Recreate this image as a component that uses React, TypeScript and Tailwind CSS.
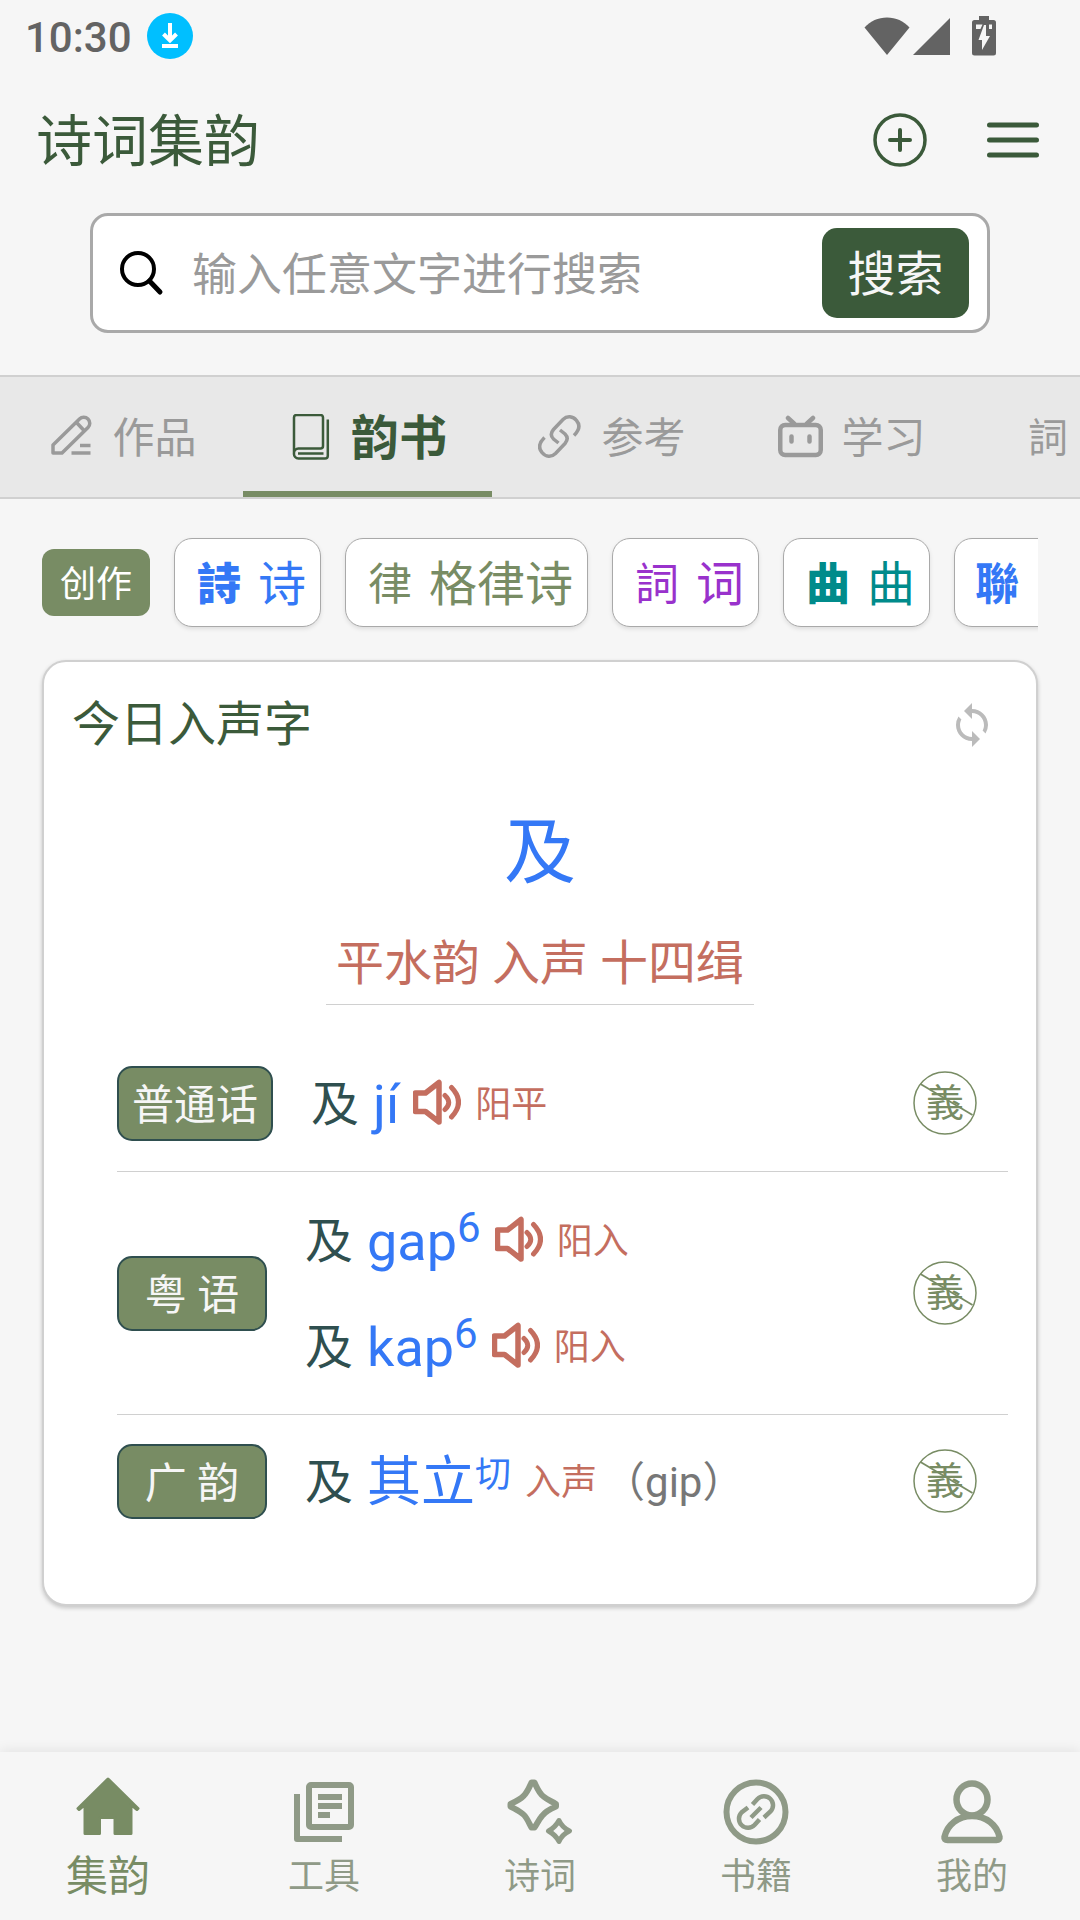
import type { ReactNode } from 'react';
import { MdSync } from 'react-icons/md';

type IconProps = { className?: string };

/* ---------- status bar icons ---------- */

function DownloadBadge() {
  return (
    <svg viewBox="0 0 46 46" className="h-[46px] w-[46px]" aria-hidden="true">
      <circle cx="23" cy="23" r="23" fill="#00bfff" />
      <path d="M23 10v16M16.5 21l6.5 6.5 6.5-6.5" fill="none" stroke="#fff" strokeWidth="4" />
      <path d="M15 33h16" stroke="#fff" strokeWidth="4" />
    </svg>
  );
}

function StatusIcons() {
  return (
    <div className="flex items-center text-[#636363]">
      <svg viewBox="0 0 46 40" className="h-[40px] w-[46px]" aria-hidden="true">
        <path d="M23 39 0.5 11.5C6.5 5 14 1.5 23 1.5S39.500 5 45.500 11.500Z" fill="currentColor" />
      </svg>
      <svg viewBox="0 0 37 40" className="ml-[3px] h-[40px] w-[37px]" aria-hidden="true">
        <path d="M37 2v37H0Z" fill="currentColor" />
      </svg>
      <svg viewBox="0 0 24 40" className="ml-[22px] h-[40px] w-[24px]" aria-hidden="true">
        <path d="M7 0h10v4h4.500Q24 4 24 6.500V37q0 2.500-2.500 2.500h-19Q0 39.500 0 37V6.500Q0 4 2.500 4H7Z" fill="currentColor" />
        <path d="M14 9v11h4L10 34V24H6.500L12 9Z" fill="#f6f6f6" />
        <path d="M4 8.500h6.500L8.500 13H4ZM17 8.500h3V13h-3Z" fill="#f6f6f6" />
      </svg>
    </div>
  );
}

/* ---------- tab icons ---------- */

function PencilIcon({ className }: IconProps) {
  return (
    <svg viewBox="0 0 45 45" className={className} fill="none" stroke="currentColor" strokeWidth="3.500" strokeLinejoin="round" aria-hidden="true">
      <path d="M4 38V30L30.500 4a6 6 0 0 1 8.500 8.500L13 38Z" />
      <path d="M27.500 7.500l7.500 8M31 30.500h10.500M22.500 38h19" />
    </svg>
  );
}

function BookIcon({ className }: IconProps) {
  return (
    <svg viewBox="0 0 45 46" className={className} fill="none" stroke="currentColor" strokeWidth="2.500" aria-hidden="true">
      <path d="M6 39.500V3.500A2.500 2.500 0 0 1 8.500 1h24A2.500 2.500 0 0 1 35 3.500V32a2.500 2.500 0 0 1-2.500 2.500H10.500a4.500 4.500 0 0 0-4.500 5a4.500 4.500 0 0 0 4.500 5H37a2.800 2.800 0 0 0 2.800-2.800V5.500" />
      <path d="M10 39.500h25.500" />
    </svg>
  );
}

function ChainIcon({ className }: IconProps) {
  return (
    <svg viewBox="0 0 45 45" className={className} fill="none" stroke="currentColor" strokeWidth="3.500" aria-hidden="true">
      <path d="M36 20.500c6-6 6-11 2.500-15c-3.500-4.500-9.500-5-13.500-1L15.500 14.500c-3 3.500-3 6.500 0 9.500l5 4" />
      <path d="M6.500 22.500c-6 6-6 11-2.500 15c3.500 4.500 9.500 5 13.500 1L27 28.500c3-3.500 3-6.500 0-9.500l-5-4" />
    </svg>
  );
}

function TvIcon({ className }: IconProps) {
  return (
    <svg viewBox="0 0 45 45" className={className} fill="none" stroke="currentColor" strokeWidth="4.500" strokeLinecap="round" aria-hidden="true">
      <rect x="2.250" y="10" width="40.500" height="30" rx="5" />
      <path d="M10 3l6 5.500M35 3l-6 5.500M13.500 21.500v5M31.500 21.500v5" />
    </svg>
  );
}

/* ---------- content icons ---------- */

function SpeakerIcon() {
  return (
    <svg viewBox="0 0 48 48" className="h-[48px] w-[48px]" fill="none" stroke="currentColor" strokeLinejoin="round" strokeLinecap="round" aria-hidden="true">
      <path d="M2.500 14H12.500L26 3.500V43L12.500 32.500H2.500Z" strokeWidth="5.500" />
      <path d="M32 16.500q7.500 7 0 14M38.500 8.500q14 14.500 0 29.500" strokeWidth="5" />
    </svg>
  );
}

function MeaningButton() {
  return (
    <button type="button" aria-label="释义" className="relative flex h-[64px] w-[64px] shrink-0 items-center justify-center text-[#788c64]">
      <svg viewBox="0 0 64 64" className="absolute inset-0" fill="none" stroke="currentColor" aria-hidden="true">
        <circle cx="32" cy="32" r="31" strokeWidth="1.500" />
        <path d="M7.500 13 59.500 44" strokeWidth="1.800" />
      </svg>
      <span className="text-[38px] leading-none">義</span>
    </button>
  );
}

/* ---------- bottom bar icons ---------- */

function HomeIcon({ className }: IconProps) {
  return (
    <svg viewBox="0 0 66 66" className={className} fill="currentColor" stroke="currentColor" strokeWidth="3" strokeLinejoin="round" strokeLinecap="round" aria-hidden="true">
      <path d="M33 0 3 29.500l1 1 6-5V54.500H24.500V38.500H40V54.500H56V25.500l6 5 1-1Z" />
    </svg>
  );
}

function PagesIcon({ className }: IconProps) {
  return (
    <svg viewBox="0 0 66 66" className={className} fill="none" stroke="currentColor" strokeWidth="6" strokeLinejoin="round" aria-hidden="true">
      <rect x="18" y="6" width="42" height="42" rx="2" />
      <path d="M6 15V60H51M27 18H51M27 27H51M27 36H39" />
    </svg>
  );
}

function SparkleIcon({ className }: IconProps) {
  return (
    <svg viewBox="0 0 66 66" className={className} fill="none" stroke="currentColor" strokeLinejoin="round" aria-hidden="true">
      <path strokeWidth="6" d="M24.500 3.500h3C31 11 32 14 36.500 17.500C40 20.500 44 22 49 25v2.500C43 30 38 33 35 37C31.500 41 30 45 27.500 48.500h-3C22 44 20 39 17 36C13 32 9 30.500 3.500 27.500V25C10 22 14 20 17 16.500C20.500 13 22 9 24.500 3.500Z" />
      <path strokeWidth="5" d="M52 41.500C54 46 56.500 49 62.500 52C57 54.500 54.500 57 52 62.500C49.500 57.500 47 55 41.500 52C47 49 49 47 52 41.500Z" />
    </svg>
  );
}

function LinkCircleIcon({ className }: IconProps) {
  return (
    <svg viewBox="0 0 66 66" className={className} fill="none" stroke="currentColor" aria-hidden="true">
      <circle cx="33" cy="33" r="29.500" strokeWidth="6" />
      <path strokeWidth="4.500" d="M29.500 25.500l5-5.500a8.800 8.800 0 0 1 13 12.500L41 38.500M36.500 40.500l-5 5.500a8.800 8.800 0 0 1-13-12.500L25 28.500M28 38.500L38 28.500" />
    </svg>
  );
}

function PersonIcon({ className }: IconProps) {
  return (
    <svg viewBox="0 0 66 66" className={className} fill="none" stroke="currentColor" strokeWidth="6.500" strokeLinejoin="round" aria-hidden="true">
      <ellipse cx="33" cy="20.500" rx="15.500" ry="16" />
      <path d="M5.500 58C8 46 19 37 33 37S58 46 60.500 58Q61 61 57.500 61H8.500Q5 61 5.500 58Z" />
    </svg>
  );
}

/* ---------- data ---------- */

const tabs = [
  { label: '作品', icon: <PencilIcon className="h-[45px] w-[45px]" /> },
  { label: '韵书', icon: <BookIcon className="h-[46px] w-[45px]" />, active: true },
  { label: '参考', icon: <ChainIcon className="h-[45px] w-[45px]" /> },
  { label: '学习', icon: <TvIcon className="h-[45px] w-[45px]" /> },
];

const kinds = [
  { glyph: '詩', label: '诗', color: 'text-[#3478f6]', weight: 'font-black' },
  { glyph: '律', label: '格律诗', color: 'text-[#788c64]', weight: 'font-normal' },
  { glyph: '詞', label: '词', color: 'text-[#9932cc]', weight: 'font-normal' },
  { glyph: '曲', label: '曲', color: 'text-[#008b8b]', weight: 'font-black' },
];

const navItems = [
  { label: '集韵', icon: <HomeIcon className="h-[66px] w-[66px] overflow-visible" />, active: true },
  { label: '工具', icon: <PagesIcon className="h-[66px] w-[66px]" /> },
  { label: '诗词', icon: <SparkleIcon className="h-[66px] w-[66px]" /> },
  { label: '书籍', icon: <LinkCircleIcon className="h-[66px] w-[66px]" /> },
  { label: '我的', icon: <PersonIcon className="h-[66px] w-[66px]" /> },
];

/* ---------- pieces ---------- */

function Reading({ sound, sup, tone, speaker, note }: { sound: string; sup?: ReactNode; tone: string; speaker?: boolean; note?: string }) {
  return (
    <div className="flex h-[106px] items-center gap-[14px] whitespace-nowrap">
      <span className="pt-1 text-[48px] leading-[60px] text-[#2f4f4f]">及</span>
      <span className="pt-1 text-[54px] leading-[60px] text-[#3478f6]">
        {sound}
        {sup}
      </span>
      {speaker && (
        <button type="button" aria-label="播放读音" className="text-[#c46e5f]">
          <SpeakerIcon />
        </button>
      )}
      <span className="pt-1 text-[36px] leading-[60px] text-[#c46e5f]">{tone}</span>
      {note && <span className="-ml-2 pt-1 text-[42px] leading-[60px] text-[#777]">{note}</span>}
    </div>
  );
}

function DialectRow({ name, wide, children, className }: { name: string; wide?: boolean; children: ReactNode; className: string }) {
  return (
    <li className={`flex items-center pr-[31px] ${className}`}>
      <span
        className={`flex h-[75px] shrink-0 items-center justify-center rounded-[15px] border-2 border-[#2f4f4f] bg-[#788c64] pt-1 text-[42px] whitespace-nowrap text-[#f6f6f6] ${
          wide ? 'w-[156px]' : 'w-[150px]'
        }`}
      >
        {name}
      </span>
      <div className="ml-[38px] flex-1">{children}</div>
      <MeaningButton />
    </li>
  );
}

export default function App() {
  return (
    <div className="flex min-h-screen flex-col overflow-x-hidden bg-[#f6f6f6] font-[Roboto,'Noto_Sans_CJK_SC',sans-serif]">
      <div className="flex h-[72px] items-center justify-between pr-[84px] pl-[25px]">
        <div className="flex items-center gap-[15px]">
          <span className="pt-1 text-[42px] leading-[60px] font-medium text-[#636363]">10:30</span>
          <DownloadBadge />
        </div>
        <StatusIcons />
      </div>

      <header className="flex h-[135px] items-center justify-between pr-[41px] pl-[36px] text-[#3b5a3a]">
        <h1 className="pt-1 text-[56px] leading-[72px]">诗词集韵</h1>
        <div className="flex items-center gap-[60px]">
          <button type="button" aria-label="新建">
            <svg viewBox="0 0 54 54" className="h-[54px] w-[54px]" fill="none" stroke="currentColor" aria-hidden="true">
              <circle cx="27" cy="27" r="25" strokeWidth="3.500" />
              <path d="M27 17v20M17 27h20" strokeWidth="4" strokeLinecap="round" />
            </svg>
          </button>
          <button type="button" aria-label="菜单">
            <svg viewBox="0 0 52 54" className="h-[54px] w-[52px]" fill="none" stroke="currentColor" strokeWidth="5" strokeLinecap="round" aria-hidden="true">
              <path d="M2.500 12h47M2.500 27h47M2.500 42h47" />
            </svg>
          </button>
        </div>
      </header>

      <form
        role="search"
        onSubmit={(e) => e.preventDefault()}
        className="mx-[90px] mt-[6px] mb-[42px] flex h-[120px] items-center rounded-[18px] border-3 border-[#a9a9a9] bg-white pr-[18px] pl-[24px]"
      >
        <svg viewBox="0 0 48 48" className="h-[48px] w-[48px] shrink-0" fill="none" stroke="#000" strokeWidth="4" strokeLinecap="round" aria-hidden="true">
          <circle cx="21" cy="20" r="16" />
          <path d="M32.500 32 43 43" strokeWidth="5" />
        </svg>
        <input
          type="text"
          aria-label="搜索内容"
          placeholder="输入任意文字进行搜索"
          className="ml-[27px] h-[72px] min-w-0 flex-1 bg-transparent pt-1 text-[45px] leading-[60px] outline-none placeholder:text-[#9a9a9a]"
        />
        <button type="submit" className="h-[90px] w-[147px] shrink-0 rounded-[15px] bg-[#3b5a3a] pt-1 text-[48px] leading-[60px] text-[#f6f6f6]">
          搜索
        </button>
      </form>

      <nav aria-label="栏目" className="flex h-[124px] overflow-hidden border-y-2 border-[#d0d0d0] bg-[#e8e8e8] pl-[3px]">
        {tabs.map((t) => (
          <button
            key={t.label}
            type="button"
            className={`flex shrink-0 items-center justify-center gap-[18px] border-y-6 border-t-transparent ${
              t.active ? 'w-[249px] border-b-[#788c64] text-[48px] font-bold text-[#3b5a3a]' : 'w-[240px] border-b-transparent text-[42px] text-[#9a9a9a]'
            }`}
          >
            {t.icon}
            <span className="pt-1 leading-[60px]">{t.label}</span>
          </button>
        ))}
        <button type="button" className="shrink-0 pt-1 pl-[56px] text-[40px] leading-[60px] text-[#9a9a9a]">
          詞
        </button>
      </nav>

      <div className="mx-[42px] flex items-center gap-[24px] overflow-hidden pt-[39px] pb-[12px]">
        <button type="button" className="h-[67px] w-[108px] shrink-0 rounded-[12px] bg-[#788c64] pt-1 text-[36px] leading-[60px] text-white">
          创作
        </button>
        {kinds.map((k) => (
          <button
            key={k.label}
            type="button"
            className={`flex h-[89px] shrink-0 items-center gap-[15px] rounded-[18px] border border-[#a9a9a9] bg-white pt-1 pr-[14px] pl-[20px] shadow-[0_2px_4px_rgba(0,0,0,0.1)] ${k.color}`}
          >
            <span className={`w-[48px] text-[44px] leading-[60px] ${k.weight}`}>{k.glyph}</span>
            <span className="text-[48px] leading-[60px]">{k.label}</span>
          </button>
        ))}
        <button
          type="button"
          className="flex h-[89px] w-[147px] shrink-0 items-center rounded-[18px] border border-[#a9a9a9] bg-white pt-1 pl-[20px] text-[44px] leading-[60px] font-bold text-[#3478f6] shadow-[0_2px_4px_rgba(0,0,0,0.1)]"
        >
          聯
        </button>
      </div>

      <main className="mx-[42px] mt-[21px] mb-[40px] rounded-[24px] border-2 border-[#d0d0d0] bg-white pb-[57px] shadow-[0_2px_4px_rgba(0,0,0,0.2)]">
        <div className="flex items-center justify-between pt-[33px] pr-[40px] pl-[28px]">
          <h2 className="text-[48px] leading-[60px] text-[#3b5a3a]">今日入声字</h2>
          <button type="button" aria-label="刷新" className="text-[#bbb]">
            <MdSync size={48} />
          </button>
        </div>

        <div className="flex flex-col items-center pt-[53px]">
          <a href="#ji" className="text-[72px] leading-[90px] text-[#3478f6]">
            及
          </a>
          <a href="#rhyme" className="mt-[36px] border-b border-[#d0d0d0] px-[10px] pb-[10px] text-[48px] leading-[60px] text-[#c46e5f]">
            平水韵 入声 十四缉
          </a>
        </div>

        <ul className="mt-[32px] mr-[28px] ml-[73px]">
          <DialectRow name="普通话" wide className="border-b border-[#d0d0d0] pt-[13px] pb-[15px]">
            <Reading sound="jí" tone="阳平" speaker />
          </DialectRow>
          <DialectRow name="粤 语" className="border-b border-[#d0d0d0] py-[15px]">
            <Reading sound="gap" sup={<sup className="top-[-18px] text-[42px]">6</sup>} tone="阳入" speaker />
            <Reading sound="kap" sup={<sup className="top-[-18px] text-[42px]">6</sup>} tone="阳入" speaker />
          </DialectRow>
          <DialectRow name="广 韵" className="py-[13px]">
            <Reading sound="其立" sup={<sup className="top-[-14px] text-[36px]">切</sup>} tone="入声" note="（gip）" />
          </DialectRow>
        </ul>
      </main>

      <nav aria-label="主导航" className="mt-auto grid h-[168px] grid-cols-5 bg-[#f6f6f6] shadow-[0_-2px_12px_rgba(0,0,0,0.08)]">
        {navItems.map((n) => (
          <a
            key={n.label}
            href={`#${n.label}`}
            className={`flex flex-col items-center pt-[27px] ${n.active ? 'text-[42px] text-[#788c64]' : 'text-[36px] text-[#8f9a87]'}`}
          >
            {n.icon}
            <span className="leading-[64px]">{n.label}</span>
          </a>
        ))}
      </nav>
    </div>
  );
}
